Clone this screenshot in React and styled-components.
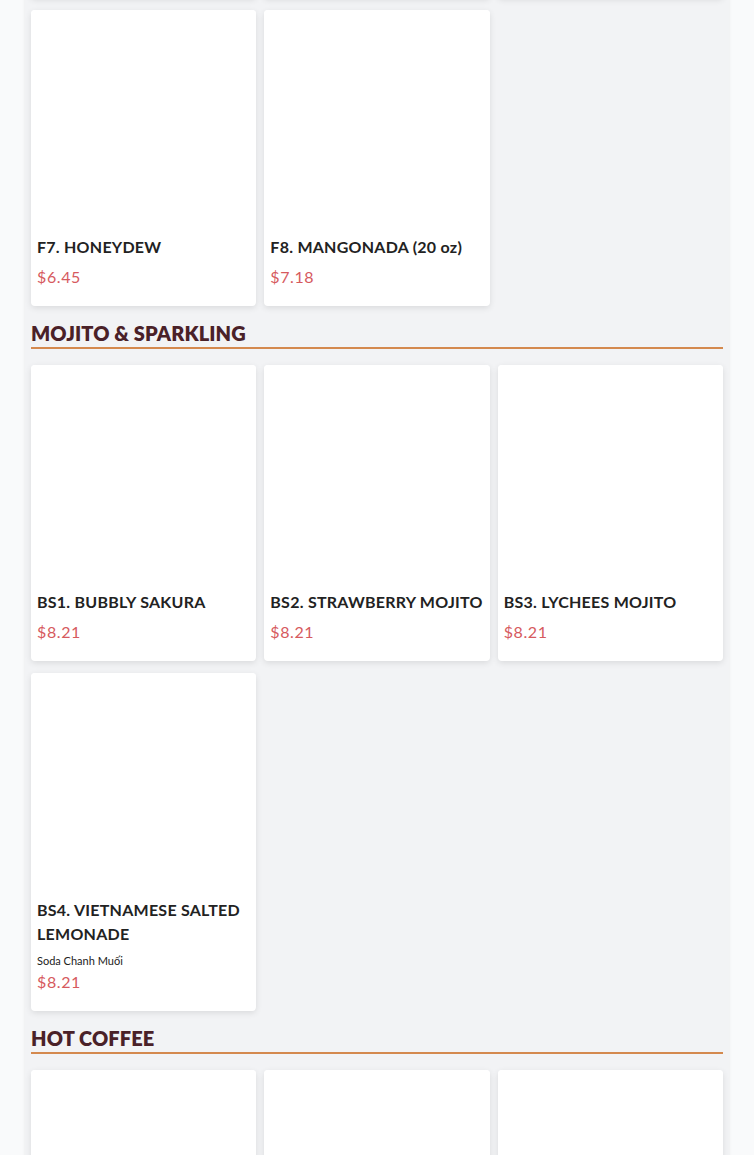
import React from "react";
import styled, { createGlobalStyle } from "styled-components";

const GlobalStyle = createGlobalStyle`
  html, body {
    margin: 0;
    padding: 0;
    background: #f9fafb;
    font-family: Lato, "Noto Sans", sans-serif;
    overflow: hidden;
  }
  * { box-sizing: border-box; }
`;

const Page = styled.div`
  height: 1155px;
  overflow: hidden;
`;

// the page is scrolled: the row above F7/F8 only shows its bottom shadow
const Menu = styled.main`
  margin: -298.5px 0 0 25px;
  width: 704px;
  padding: 0 6px;
  background: #f2f3f5;
  box-shadow: 0 0 3px rgba(0, 0, 0, 0.08);
  min-height: 1500px;
`;

const Section = styled.section`
  margin-bottom: 13px;
`;

const Heading = styled.h2`
  margin: 0 0 16px;
  font-size: 20px;
  line-height: 28px;
  font-weight: 800;
  color: #4a2128;
  letter-spacing: 0.1px;
  text-transform: uppercase;
  border-bottom: 2px solid #d4894e;
`;

const Grid = styled.div`
  display: grid;
  grid-template-columns: repeat(3, 1fr);
  column-gap: 8px;
  row-gap: 12px;
`;

const Card = styled.article`
  background: #fff;
  border-radius: 4px;
  box-shadow: 0 2px 6px rgba(0, 0, 0, 0.1);
  display: flex;
  flex-direction: column;
`;

const Photo = styled.div`
  height: 225px;
  background: #fff;
  border-radius: 4px 4px 0 0;
`;

const Body = styled.div`
  padding: 0 6px 17px;
  display: flex;
  flex-direction: column;
`;

const Title = styled.h3`
  margin: 0 0 6px;
  font-size: 16px;
  line-height: 24px;
  font-weight: 700;
  letter-spacing: 0.25px;
  color: #222;
`;

const Note = styled.p`
  margin: 1px 0 1px;
  font-size: 11px;
  line-height: 16px;
  color: #222;
`;

const Price = styled.span`
  font-size: 16px;
  line-height: 24px;
  letter-spacing: 0.6px;
  color: #d65a5e;
`;

const sections = [
  {
    name: null,
    items: [
      { code: "F4", name: "WATERMELON", price: "6.45" },
      { code: "F5", name: "PINEAPPLE", price: "6.45" },
      { code: "F6", name: "LYCHEE", price: "6.45" },
      { code: "F7", name: "HONEYDEW", price: "6.45" },
      { code: "F8", name: "MANGONADA (20 oz)", price: "7.18" },
    ],
  },
  {
    name: "Mojito & Sparkling",
    items: [
      { code: "BS1", name: "BUBBLY SAKURA", price: "8.21" },
      { code: "BS2", name: "STRAWBERRY MOJITO", price: "8.21" },
      { code: "BS3", name: "LYCHEES MOJITO", price: "8.21" },
      { code: "BS4", name: "VIETNAMESE SALTED LEMONADE", note: "Soda Chanh Muối", price: "8.21" },
    ],
  },
  {
    name: "Hot Coffee",
    items: [
      { code: "HC1", name: "HOT COFFEE", price: "4.50" },
      { code: "HC2", name: "HOT LATTE", price: "5.25" },
      { code: "HC3", name: "HOT MOCHA", price: "5.25" },
    ],
  },
];

function MenuCard({ item }) {
  return (
    <Card>
      <Photo />
      <Body>
        <Title>
          {item.code}. {item.name}
        </Title>
        {item.note && <Note>{item.note}</Note>}
        <Price>${item.price}</Price>
      </Body>
    </Card>
  );
}

export default function App() {
  return (
    <Page>
      <GlobalStyle />
      <Menu>
        {sections.map((s, i) => (
          <Section key={i}>
            {s.name && <Heading>{s.name}</Heading>}
            <Grid>
              {s.items.map((item) => (
                <MenuCard key={item.code} item={item} />
              ))}
            </Grid>
          </Section>
        ))}
      </Menu>
    </Page>
  );
}
